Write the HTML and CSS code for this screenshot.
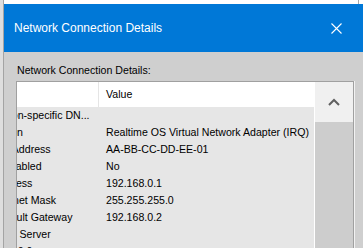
FILE: index.html
```html
<!DOCTYPE html>
<html lang="en">
<head>
  <meta charset="UTF-8">
  <title>Network Connection Details</title>
  <link rel="stylesheet" href="styles.css">
</head>
<body>
  <div class="desk">
    <div class="behind"></div>
    <div class="main">
      <div class="gap"></div>
      <div class="dialog">
        <div class="titlebar">
          <span class="title">Network Connection Details</span>
          <svg class="close" width="11" height="11" viewBox="0 0 11 11">
            <path d="M0.5 0.5 L10.5 10.5 M10.5 0.5 L0.5 10.5" stroke="#fff" stroke-width="1.1" fill="none"/>
          </svg>
        </div>
        <div class="content">
          <div class="label">Network Connection Details:</div>
          <div class="listview">
            <div class="view">
              <div class="inner">
                <div class="head">
                  <div class="c1">Property</div>
                  <div class="c2">Value</div>
                </div>
                <div class="row"><div class="c1">Connection-specific DN...</div><div class="c2"></div></div>
                <div class="row"><div class="c1">Description</div><div class="c2">Realtime OS Virtual Network Adapter (IRQ)</div></div>
                <div class="row"><div class="c1">Physical Address</div><div class="c2">AA-BB-CC-DD-EE-01</div></div>
                <div class="row"><div class="c1">DHCP Enabled</div><div class="c2">No</div></div>
                <div class="row"><div class="c1">IPv4 Address</div><div class="c2">192.168.0.1</div></div>
                <div class="row"><div class="c1">IPv4 Subnet Mask</div><div class="c2">255.255.255.0</div></div>
                <div class="row"><div class="c1">IPv4 Default Gateway</div><div class="c2">192.168.0.2</div></div>
                <div class="row"><div class="c1">IPv4 DNS Server</div><div class="c2"></div></div>
                <div class="row"><div class="c1">Connectio0.0</div><div class="c2"></div></div>
              </div>
            </div>
            <div class="scrollbar">
              <div class="arrow">
                <svg width="12" height="8" viewBox="0 0 12 8">
                  <path d="M1 7 L6 2 L11 7" stroke="#606060" stroke-width="2" fill="none"/>
                </svg>
              </div>
              <div class="thumb"></div>
            </div>
          </div>
        </div>
      </div>
    </div>
  </div>
</body>
</html>
```

FILE: styles.css
```css
html, body {
  margin: 0;
  height: 100%;
  overflow: hidden;
  background: #fff;
  font-family: "Liberation Sans", Arial, sans-serif;
}
.desk {
  display: flex;
  height: 248px;
}
.behind {
  width: 3px;
  background: #dedede;
  border-right: 1px solid #a4a4a4;
}
.main {
  flex: 1;
  display: flex;
  flex-direction: column;
  min-width: 0;
}
.gap {
  flex: none;
  height: 4px;
  display: flex;
  justify-content: flex-end;
}
.gap::after {
  content: "";
  width: 1px;
  background: #a8a8a8;
  margin-right: 4px;
}
.dialog {
  flex: 1;
  min-height: 0;
  overflow: hidden;
  display: flex;
  flex-direction: column;
  background: #cfcfcf;
}
.titlebar {
  flex: none;
  height: 48px;
  background: #0078d7;
  display: flex;
  align-items: center;
  padding: 0 21px 0 10px;
  color: #fff;
}
.title {
  flex: 1;
  font-size: 12px;
}
.content {
  padding: 11px 9px 0 12px;
}
.label {
  height: 14px;
  line-height: 14px;
  font-size: 10.6px;
  color: #000;
  padding-left: 1px;
  margin-bottom: 4px;
}
.listview {
  display: flex;
  height: 170px;
  border: 1px solid #a0a0a0;
  border-bottom: none;
  box-shadow: 1px 0 0 #f2f2f2;
  background: #e6e6e6;
}
.view {
  width: 297px;
  flex: none;
  overflow: hidden;
}
.inner {
  margin-left: -53px;
  font-size: 10.6px;
  color: #000;
}
.head {
  display: flex;
  height: 25px;
  line-height: 25px;
  background: #fff;
}
.head .c1 {
  border-right: 1px solid #e5e5e5;
}
.row {
  display: flex;
  height: 17px;
  line-height: 17px;
}
.c1 {
  box-sizing: border-box;
  width: 135px;
  padding-left: 6px;
  white-space: nowrap;
  overflow: hidden;
  flex: none;
}
.c2 {
  padding-left: 7px;
  white-space: nowrap;
}
.scrollbar {
  width: 38px;
  border-left: 1px solid #fff;
  display: flex;
  flex-direction: column;
}
.arrow {
  height: 40px;
  background: #f0f0f0;
  display: flex;
  justify-content: center;
  align-items: center;
}
.thumb {
  flex: 1;
  background: #cdcdcd;
}
```
